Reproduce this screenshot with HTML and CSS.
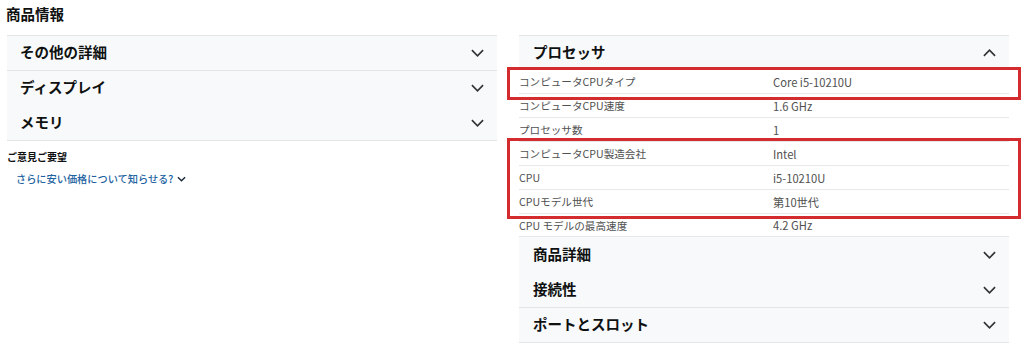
FILE: index.html
```html
<!DOCTYPE html>
<html lang="ja">
<head>
<meta charset="utf-8">
<link rel="stylesheet" href="styles.css">
</head>
<body>
<div class="page">
  <h2 class="title">商品情報</h2>
  <div class="columns">
    <div class="col">
      <div class="group">
        <div class="exp bt"><span>その他の詳細</span><svg class="chev" viewBox="0 0 14 8"><path d="M1 1l6 6 6-6"/></svg></div>
        <div class="exp bt"><span>ディスプレイ</span><svg class="chev" viewBox="0 0 14 8"><path d="M1 1l6 6 6-6"/></svg></div>
        <div class="exp bb"><span>メモリ</span><svg class="chev" viewBox="0 0 14 8"><path d="M1 1l6 6 6-6"/></svg></div>
      </div>
      <div class="feedback">ご意見ご要望</div>
      <a class="link">さらに安い価格について知らせる?<svg class="lchev" viewBox="0 0 10 6"><path d="M1 1l4 4 4-4"/></svg></a>
    </div>
    <div class="col">
      <div class="exp bt"><span>プロセッサ</span><svg class="chev" viewBox="0 0 14 8"><path d="M1 7l6-6 6 6"/></svg></div>
      <div class="table">
        <div class="hl hl1">
          <div class="row"><div class="k">コンピュータCPUタイプ</div><div class="v">Core i5-10210U</div></div>
        </div>
        <div class="row"><div class="k">コンピュータCPU速度</div><div class="v">1.6 GHz</div></div>
        <div class="row"><div class="k">プロセッサ数</div><div class="v">1</div></div>
        <div class="hl hl2">
          <div class="row"><div class="k">コンピュータCPU製造会社</div><div class="v">Intel</div></div>
          <div class="row"><div class="k">CPU</div><div class="v">i5-10210U</div></div>
          <div class="row"><div class="k">CPUモデル世代</div><div class="v">第10世代</div></div>
        </div>
        <div class="row last"><div class="k">CPU モデルの最高速度</div><div class="v">4.2 GHz</div></div>
      </div>
      <div class="exp"><span>商品詳細</span><svg class="chev" viewBox="0 0 14 8"><path d="M1 1l6 6 6-6"/></svg></div>
      <div class="exp"><span>接続性</span><svg class="chev" viewBox="0 0 14 8"><path d="M1 1l6 6 6-6"/></svg></div>
      <div class="exp bt bb"><span>ポートとスロット</span><svg class="chev" viewBox="0 0 14 8"><path d="M1 1l6 6 6-6"/></svg></div>
    </div>
  </div>
</div>
</body>
</html>
```
FILE: styles.css
```css
* { box-sizing: border-box; }
body {
  margin: 0;
  background: #fff;
  font-family: "Noto Sans CJK JP", "Noto Sans", sans-serif;
  color: #0f1111;
}
.page { padding: 0 7px; }
.title {
  margin: 0 0 0 -1px;
  height: 35px;
  padding-top: 4px;
  font-size: 14.5px;
  line-height: 20px;
  font-weight: 700;
}
.columns {
  display: grid;
  grid-template-columns: 490px 490px;
  column-gap: 22px;
}
.exp {
  height: 35px;
  background: #f7f9fa;
  display: flex;
  align-items: center;
  justify-content: space-between;
  padding: 0 13px 0 13px;
  font-size: 14.5px;
  font-weight: 700;
  color: #0f1111;
}
.exp span { margin-bottom: 3px; }
.col > .exp { padding-left: 14px; }
.exp.bt { border-top: 1px solid #e3e6e6; }
.exp.bb { border-bottom: 1px solid #e3e6e6; height: 36px; }
.chev {
  width: 13px;
  height: 8px;
  fill: none;
  stroke: #333;
  stroke-width: 1.8;
}
.feedback {
  margin-top: 9px;
  font-size: 10px;
  line-height: 14px;
  font-weight: 700;
  color: #0f1111;
}
.link {
  display: flex;
  align-items: center;
  gap: 4px;
  margin-top: 8px;
  margin-left: 9px;
  font-size: 10.2px;
  line-height: 14px;
  color: #2162a1;
  font-weight: 500;
}
.lchev {
  width: 9px;
  height: 6px;
  fill: none;
  stroke: #1d2b3a;
  stroke-width: 1.6;
}
.table { font-size: 10.6px; color: #505050; }
.row {
  height: 24px;
  display: flex;
  align-items: center;
  border-bottom: 1px solid #e7e7e7;
}
.row.last { height: 23px; }
.k { width: 254px; }
.v { flex: 1; font-size: 11.2px; }
.hl { position: relative; }
.hl::after {
  content: "";
  position: absolute;
  border: 3px solid #d42b2f;
  left: -12px;
  right: -12px;
}
.hl1::after { top: -3px; bottom: -6px; }
.hl2::after { top: -4px; bottom: -5px; }
```
